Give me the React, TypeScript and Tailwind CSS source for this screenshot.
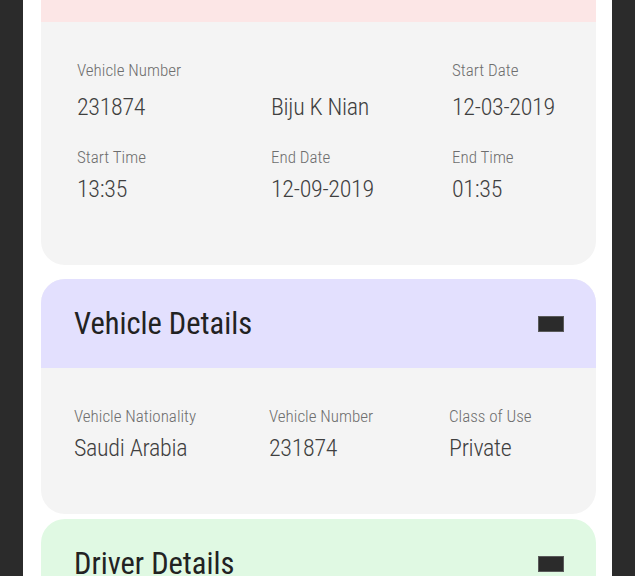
const font = "font-['Roboto_Condensed',Roboto,sans-serif]";

function Label({ children }: { children?: React.ReactNode }) {
  return <div className="text-[17px] leading-[20px] h-[20px] font-light text-[#6e6e6e] whitespace-nowrap">{children}</div>;
}

function Value({ children }: { children: React.ReactNode }) {
  return <div className="text-[24px] leading-[28px] tracking-[-0.3px] font-light text-[#3f3f3f] whitespace-nowrap">{children}</div>;
}

function MinusIcon() {
  return <div className="w-[26px] h-[16px] bg-[#2b2b2b] border border-[#5a5a5a]" />;
}

export default function App() {
  return (
    <div className={`h-[576px] w-full overflow-hidden bg-[#2b2b2b] ${font}`}>
      <div className="mx-auto w-[589px] h-full bg-white">
        {/* Card 1 (scrolled) */}
        <div className="ml-[18px] w-[555px] rounded-b-[24px] overflow-hidden bg-[#f4f4f4]">
          <div className="h-[22px] bg-[#fce6e6]" />
          <div className="pl-[36px] pt-[38px] pb-[62px]">
            <div className="grid grid-cols-[194px_181px_1fr]">
              <Label>Vehicle Number</Label>
              <Label />
              <Label>Start Date</Label>
            </div>
            <div className="mt-[13px] grid grid-cols-[194px_181px_1fr]">
              <Value>231874</Value>
              <Value>Biju K Nian</Value>
              <Value>12-03-2019</Value>
            </div>
            <div className="mt-[26px] grid grid-cols-[194px_181px_1fr]">
              <Label>Start Time</Label>
              <Label>End Date</Label>
              <Label>End Time</Label>
            </div>
            <div className="mt-[8px] grid grid-cols-[194px_181px_1fr]">
              <Value>13:35</Value>
              <Value>12-09-2019</Value>
              <Value>01:35</Value>
            </div>
          </div>
        </div>

        {/* Card 2 */}
        <div className="mt-[14px] ml-[18px] w-[555px] rounded-[24px] overflow-hidden bg-[#f4f4f4]">
          <div className="h-[89px] bg-[#e3e0fe] flex items-center justify-between pl-[33px] pr-[32px]">
            <div className="text-[30.5px] leading-[36px] text-[#222222]">Vehicle Details</div>
            <MinusIcon />
          </div>
          <div className="pl-[33px] pt-[38px] pb-[52px]">
            <div className="grid grid-cols-[195px_180px_1fr]">
              <Label>Vehicle Nationality</Label>
              <Label>Vehicle Number</Label>
              <Label>Class of Use</Label>
            </div>
            <div className="mt-[8px] grid grid-cols-[195px_180px_1fr]">
              <Value>Saudi Arabia</Value>
              <Value>231874</Value>
              <Value>Private</Value>
            </div>
          </div>
        </div>

        {/* Card 3 */}
        <div className="mt-[5px] ml-[18px] w-[555px] rounded-t-[24px] overflow-hidden bg-[#e0f9e3]">
          <div className="h-[89px] flex items-center justify-between pl-[33px] pr-[32px]">
            <div className="text-[30.5px] leading-[36px] text-[#222222]">Driver Details</div>
            <MinusIcon />
          </div>
        </div>
      </div>
    </div>
  );
}
